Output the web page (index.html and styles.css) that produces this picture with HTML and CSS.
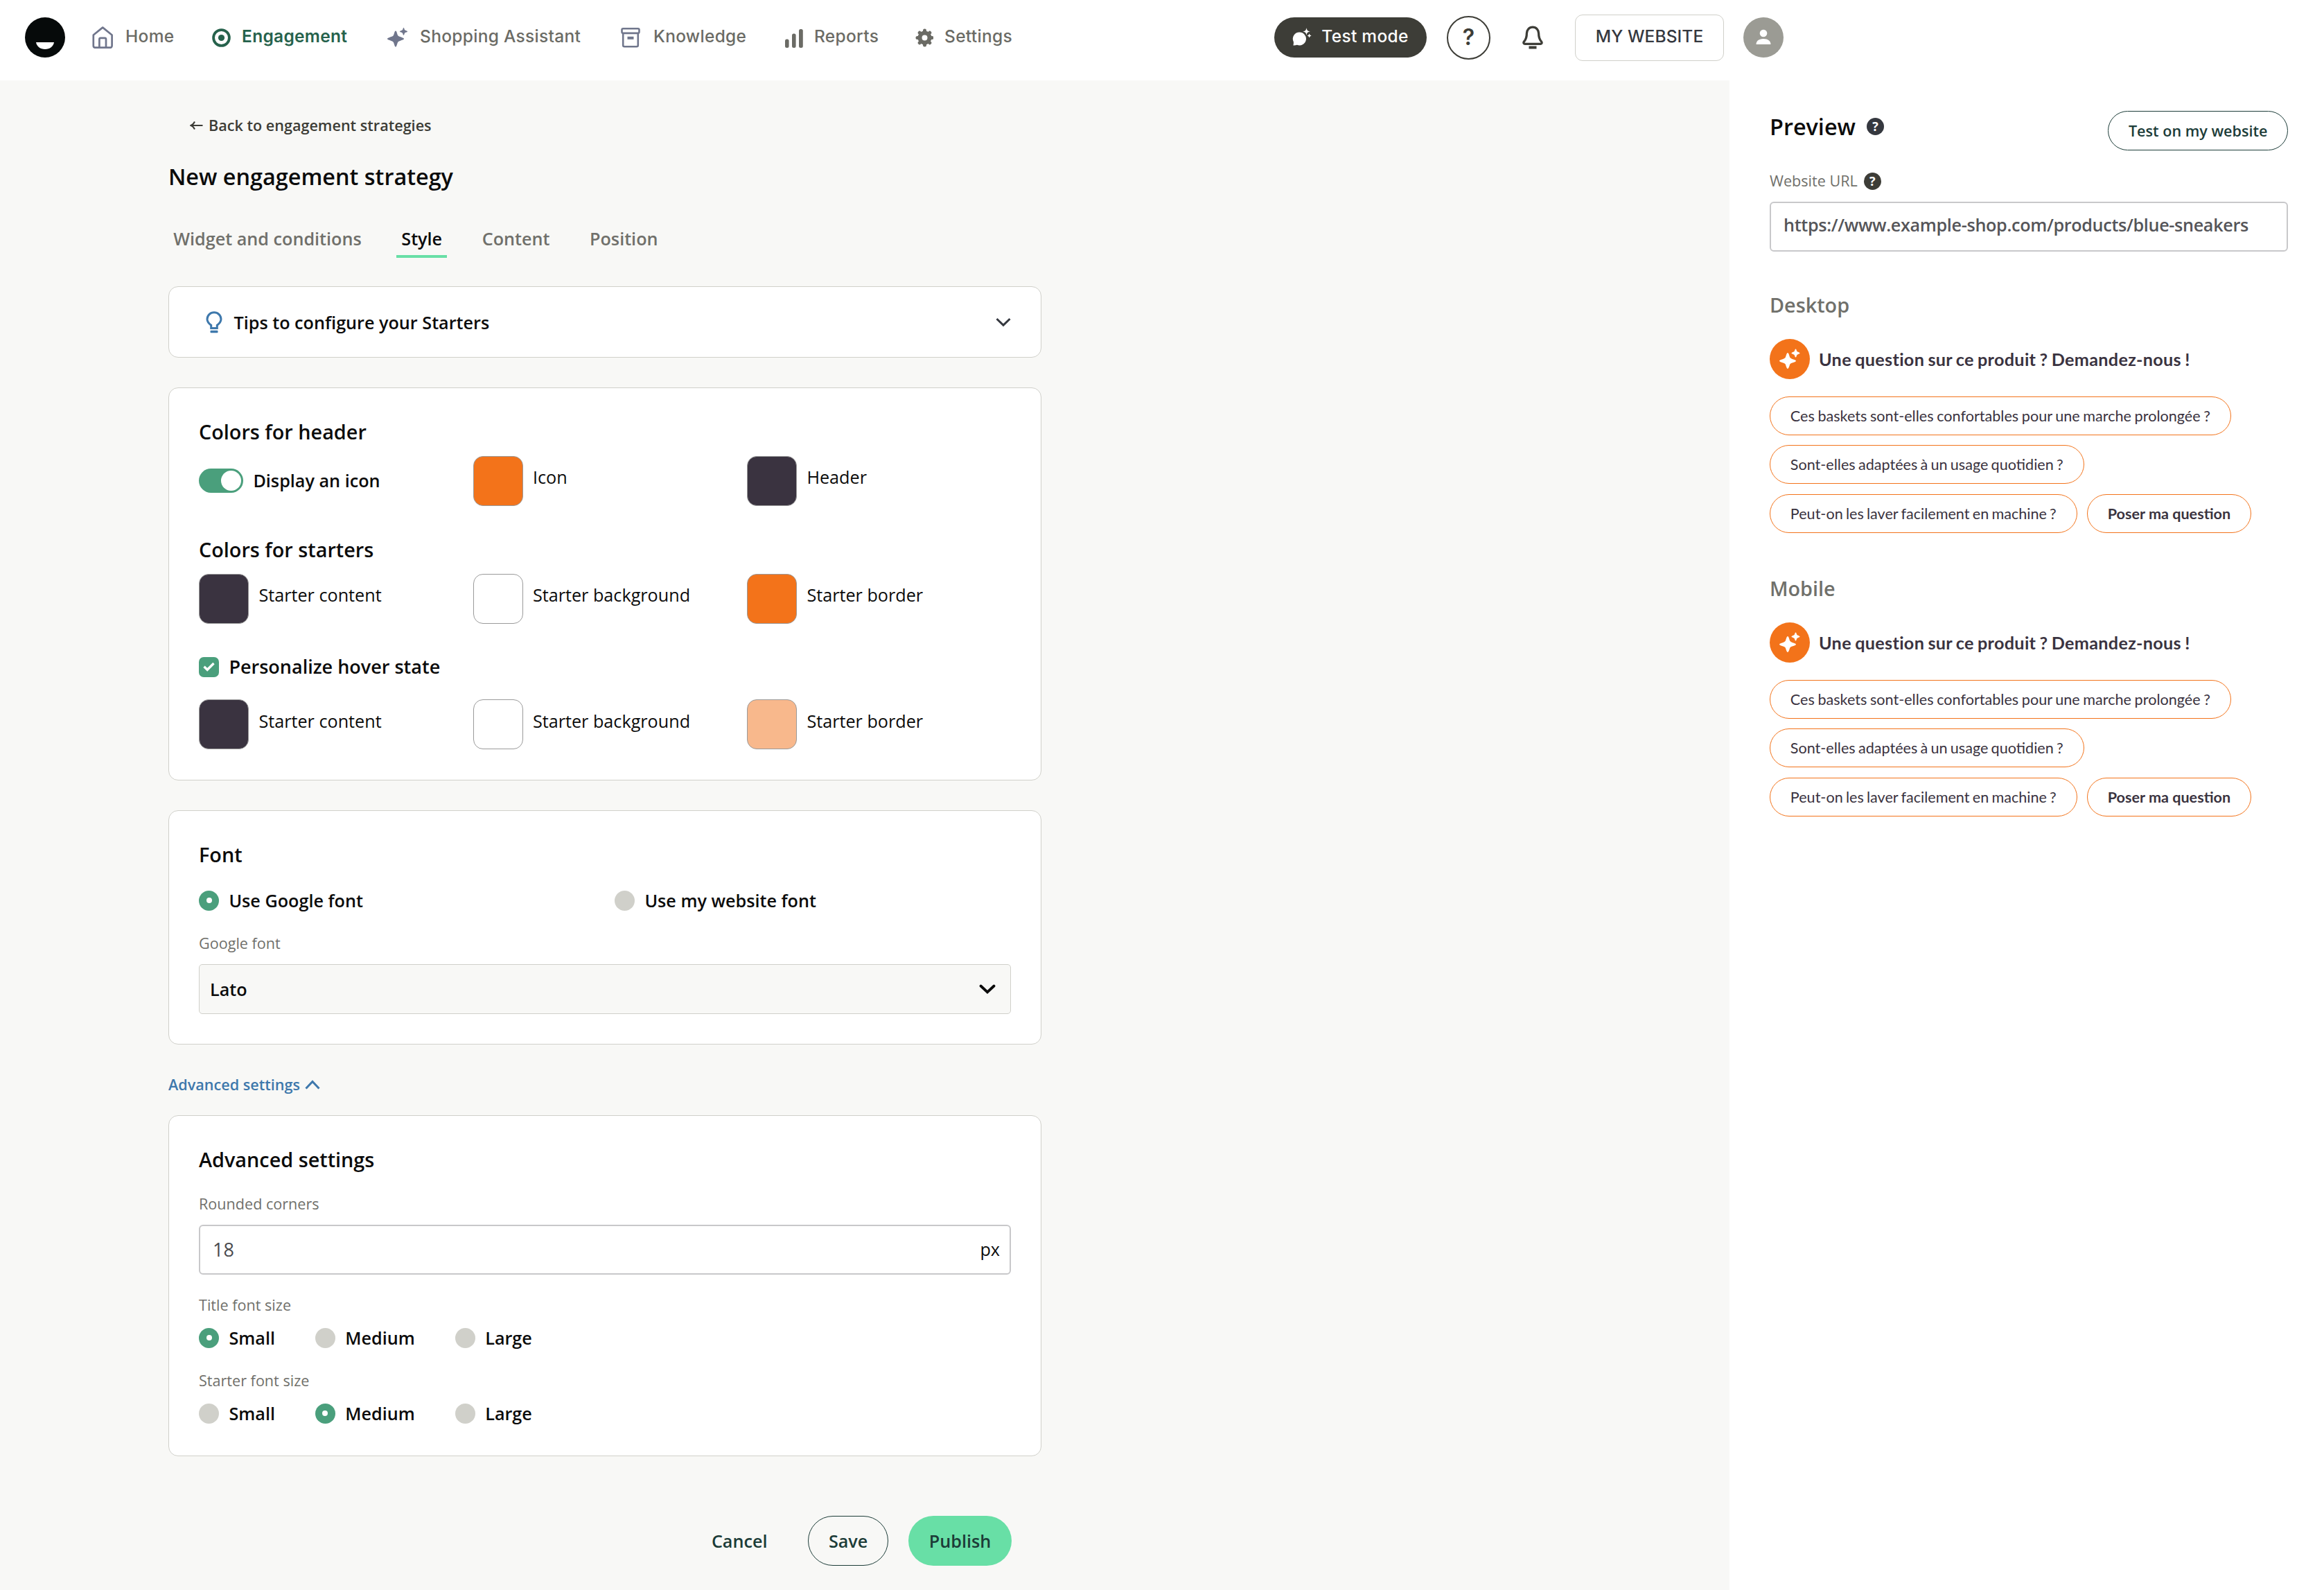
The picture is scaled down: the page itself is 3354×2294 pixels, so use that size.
FILE: index.html
```html
<!DOCTYPE html>
<html lang="en">
<head>
    <meta charset="UTF-8">
    <meta name="viewport" content="width=device-width, initial-scale=1.0">
    <title>New engagement strategy</title>
    <link rel="stylesheet" href="styles.css">
</head>
<body>
    <header class="topbar">
        <svg class="logo" viewBox="0 0 58 58">
            <circle cx="29" cy="29" r="29" fill="#060a0a"/>
            <path d="M16 36h26c-1 6-6 10-13 10s-12-4-13-10z" fill="#fff"/>
        </svg>
        <nav class="nav">
            <a class="nav-item">
                <svg class="nav-icon" viewBox="0 0 32 32" fill="none" stroke="#70768c" stroke-width="2.7" stroke-linejoin="round">
                    <path d="M1.8 12.5L15.2 1.6l13.4 10.9v15.6a2.6 2.6 0 0 1-2.6 2.6H4.4a2.6 2.6 0 0 1-2.6-2.6z"/>
                    <path d="M10.4 30.5V18.4a1.6 1.6 0 0 1 1.6-1.6h6.4a1.6 1.6 0 0 1 1.6 1.6v12.1"/>
                </svg>
                <span>Home</span>
            </a>
            <a class="nav-item active">
                <svg class="nav-icon" viewBox="0 1 32 32">
                    <circle cx="18.5" cy="17.5" r="11.4" fill="none" stroke="#26624c" stroke-width="3.8"/>
                    <circle cx="18.5" cy="17.5" r="4.6" fill="#26624c"/>
                </svg>
                <span>Engagement</span>
            </a>
            <a class="nav-item">
                <svg class="nav-icon" viewBox="0 1 32 32" fill="#70768c">
                    <path d="M13 7.500c1.500 0 1.700 3.200 3 6.300 1.200 2.600 9 3.300 9 5.200s-7.800 2.600-9 5.200c-1.300 3.100-1.500 6.300-3 6.300s-1.700-3.200-3-6.300C8.800 21.600 1 20.900 1 19s7.800-2.600 9-5.200c1.300-3.100 1.500-6.300 3-6.300z"/>
                    <path d="M24.500 3c.9 0 .9 2 1.500 3.100.7 1.100 4 1.300 4 2.300s-3.300 1.200-4 2.300c-.6 1.100-.6 3.100-1.500 3.100s-.9-2-1.500-3.100c-.7-1.100-4-1.300-4-2.300s3.300-1.200 4-2.300c.6-1.100.6-3.100 1.500-3.100z"/>
                </svg>
                <span>Shopping Assistant</span>
            </a>
            <a class="nav-item">
                <svg class="nav-icon" viewBox="0 0 32 32" fill="none" stroke="#70768c" stroke-width="2.600" stroke-linejoin="round">
                    <rect x="2.500" y="3.300" width="25" height="6.600" rx="1.800"/>
                    <path d="M4.200 9.900v17.400a2 2 0 0 0 2 2h17.600a2 2 0 0 0 2-2V9.900"/>
                    <path d="M10.500 16.800h9" stroke-width="4"/>
                </svg>
                <span>Knowledge</span>
            </a>
            <a class="nav-item">
                <svg class="nav-icon" viewBox="0 1 32 32" fill="#6b6b65">
                    <rect x="6" y="19.500" width="5.600" height="12.500" rx="2.500"/>
                    <rect x="16" y="11.500" width="5.600" height="20.500" rx="2.500"/>
                    <rect x="26" y="5" width="5.800" height="27" rx="2.500"/>
                </svg>
                <span>Reports</span>
            </a>
            <a class="nav-item">
                <svg class="nav-icon" viewBox="0 1 32 32">
                    <circle cx="19.500" cy="17.500" r="7" fill="none" stroke="#6b6b65" stroke-width="6"/>
                    <g stroke="#6b6b65" stroke-width="5" stroke-linecap="round">
                        <path d="M19.500 7v2M19.500 26v2M9 17.500h2M28 17.500h2M12.200 10.200l1.300 1.300M25.500 23.500l1.300 1.300M26.800 10.200l-1.300 1.300M13.500 23.500l-1.300 1.300"/>
                    </g>
                </svg>
                <span>Settings</span>
            </a>
        </nav>
        <button class="test-mode" type="button">
            <svg width="30" height="30" viewBox="0 0 30 30" fill="#fff">
                <path d="M10.500 7.500a9.500 9.500 0 1 1-3.600 18.300c-1.500.7-3.500.9-5.500.7 .4-1.500.7-3.200.4-5.200A9.500 9.500 0 0 1 10.500 7.500z"/>
                <path d="M20.500 0.500l1.700 4.300 4.300 1.700-4.300 1.700-1.700 4.300-1.700-4.300-4.300-1.700 4.300-1.700z" stroke="#3d3d37" stroke-width="1"/>
                <path d="M24.600 9.500l1 2 2 1-2 1-1 2-1-2-2-1 2-1z"/>
            </svg>
            <span>Test mode</span>
        </button>
        <button class="help" type="button"><span>?</span></button>
        <svg class="bell" viewBox="0 0 32 34">
            <path d="M16 2.200c5.200 0 8.600 3.900 8.600 8.900 0 6.600 1.500 9.400 3.800 11.800 1.400 1.500.9 3.400-1 3.400H4.600c-1.900 0-2.400-1.900-1-3.400 2.300-2.400 3.800-5.200 3.800-11.800 0-5 3.400-8.900 8.600-8.900z" fill="none" stroke="#3d3d37" stroke-width="3.300"/>
            <rect x="10.500" y="29.500" width="11" height="4" fill="#3d3d37"/>
        </svg>
        <button class="website" type="button"><span>MY WEBSITE</span></button>
        <svg class="avatar" viewBox="0 0 58 58">
            <circle cx="29" cy="29" r="29" fill="#9b9b94"/>
            <circle cx="29" cy="23" r="5.300" fill="#fff"/>
            <path d="M18.500 39c0-5 4-8 10.500-8s10.500 3 10.500 8z" fill="#fff"/>
        </svg>
    </header>

    <div class="layout">
        <main class="main">
            <a class="back">
                <svg width="19" height="16" viewBox="0 0 19 16" fill="none" stroke="#3d3d37" stroke-width="2">
                    <path d="M18.500 8H2M7 2.500Q5 6.800 1.500 8 5 9.200 7 13.500"/>
                </svg>
                <span>Back to engagement strategies</span>
            </a>
            <h1>New engagement strategy</h1>
            <div class="tabs">
                <a class="tab">Widget and conditions</a>
                <a class="tab selected">Style</a>
                <a class="tab">Content</a>
                <a class="tab">Position</a>
            </div>

            <section class="card tips">
                <svg width="24" height="32" viewBox="0 0 24 32">
                    <path d="M7.700 24.500v-4.200C4.500 17.800 2 15.500 2 11.500a10 9.800 0 0 1 20 0c0 4-2.500 6.300-5.700 8.800v4.200z" fill="none" stroke="#3e78ac" stroke-width="3"/>
                    <rect x="6.500" y="27.800" width="11" height="3.400" rx="1" fill="#3e78ac"/>
                </svg>
                <span>Tips to configure your Starters</span>
                <svg class="tips-arrow" width="22" height="14" viewBox="0 0 22 14" fill="none" stroke="#35383f" stroke-width="3">
                    <path d="M1.500 2l9.500 9.200L20.500 2"/>
                </svg>
            </section>

            <section class="card colors">
                <h2>Colors for header</h2>
                <div class="color-row">
                    <label class="option">
                        <span class="toggle"></span>
                        <span>Display an icon</span>
                    </label>
                    <div class="color"><span class="swatch orange"></span><span>Icon</span></div>
                    <div class="color"><span class="swatch dark"></span><span>Header</span></div>
                </div>
                <h2 class="second">Colors for starters</h2>
                <div class="color-row">
                    <div class="color"><span class="swatch dark"></span><span>Starter content</span></div>
                    <div class="color"><span class="swatch white"></span><span>Starter background</span></div>
                    <div class="color"><span class="swatch orange"></span><span>Starter border</span></div>
                </div>
                <label class="option hover-option">
                    <span class="checkbox">
                        <svg width="17" height="14" viewBox="0 0 17 14" fill="none" stroke="#fff" stroke-width="3.400">
                            <path d="M1.500 6.800l4.700 4.500L15.500 2"/>
                        </svg>
                    </span>
                    <span>Personalize hover state</span>
                </label>
                <div class="color-row hover-row">
                    <div class="color"><span class="swatch dark"></span><span>Starter content</span></div>
                    <div class="color"><span class="swatch white"></span><span>Starter background</span></div>
                    <div class="color"><span class="swatch peach"></span><span>Starter border</span></div>
                </div>
            </section>

            <section class="card font-card">
                <h2>Font</h2>
                <div class="font-options">
                    <label class="option"><span class="radio checked"></span><span>Use Google font</span></label>
                    <label class="option"><span class="radio"></span><span>Use my website font</span></label>
                </div>
                <div class="field-label">Google font</div>
                <div class="select">
                    <span>Lato</span>
                    <svg width="24" height="16" viewBox="0 0 24 16" fill="none" stroke="#0b0b0b" stroke-width="3.800" stroke-linecap="round">
                        <path d="M2.500 3.500L12 12.500l9.500-9"/>
                    </svg>
                </div>
            </section>

            <a class="advanced-link">
                <span>Advanced settings</span>
                <svg width="22" height="14" viewBox="0 0 22 14" fill="none" stroke="#3e78ac" stroke-width="3">
                    <path d="M1.500 12.500L11 2.500l9.500 10"/>
                </svg>
            </a>

            <section class="card advanced">
                <h2>Advanced settings</h2>
                <div class="field-label">Rounded corners</div>
                <div class="number-field">
                    <input type="text" value="18">
                    <span>px</span>
                </div>
                <div class="field-label">Title font size</div>
                <div class="size-options">
                    <label class="option"><span class="radio checked"></span><span>Small</span></label>
                    <label class="option"><span class="radio"></span><span>Medium</span></label>
                    <label class="option"><span class="radio"></span><span>Large</span></label>
                </div>
                <div class="field-label">Starter font size</div>
                <div class="size-options">
                    <label class="option"><span class="radio"></span><span>Small</span></label>
                    <label class="option"><span class="radio checked"></span><span>Medium</span></label>
                    <label class="option"><span class="radio"></span><span>Large</span></label>
                </div>
            </section>

            <div class="actions">
                <button class="btn" type="button">Cancel</button>
                <button class="btn save" type="button">Save</button>
                <button class="btn publish" type="button">Publish</button>
            </div>
        </main>

        <aside class="preview">
            <div class="preview-head">
                <h1>Preview</h1>
                <span class="info info-blue">?</span>
                <button class="test-button" type="button">Test on my website</button>
            </div>
            <div class="url-label">
                <span>Website URL</span>
                <span class="info">?</span>
            </div>
            <input class="url" type="text" value="https://www.example-shop.com/products/blue-sneakers">

            <h2>Desktop</h2>
            <div class="widget">
                <div class="widget-title">
                    <svg width="58" height="58" viewBox="0 0 58 58">
                        <circle cx="29" cy="29" r="29" fill="#f3731a"/>
                        <path d="M26 20c1.500 0 2.200 4 3.300 6.800 1.200 2.500 8.700 3.200 8.700 4.900s-7.500 2.400-8.700 4.900C28.200 39.400 27.500 43 26 43s-2.200-3.600-3.300-6.400C21.500 34.100 14 33.400 14 31.700s7.500-2.400 8.700-4.900C23.800 24 24.500 20 26 20z" fill="#fff"/>
                        <path d="M37.500 14.500c1 0 1.200 2.300 1.800 3.300.7 1.200 4.200 1.500 4.200 2.700s-3.500 1.500-4.200 2.700c-.6 1-.8 3.300-1.800 3.300s-1.200-2.300-1.800-3.300c-.7-1.200-4.200-1.500-4.200-2.700s3.500-1.500 4.200-2.700c.6-1 .8-3.300 1.800-3.300z" fill="#fff"/>
                    </svg>
                    <span>Une question sur ce produit ? Demandez-nous !</span>
                </div>
                <div class="starters">
                    <span class="starter long">Ces baskets sont-elles confortables pour une marche prolongée ?</span>
                    <span class="starter">Sont-elles adaptées à un usage quotidien ?</span>
                    <span class="starter">Peut-on les laver facilement en machine ?</span>
                    <span class="starter ask">Poser ma question</span>
                </div>
            </div>

            <h2>Mobile</h2>
            <div class="widget">
                <div class="widget-title">
                    <svg width="58" height="58" viewBox="0 0 58 58">
                        <circle cx="29" cy="29" r="29" fill="#f3731a"/>
                        <path d="M26 20c1.500 0 2.200 4 3.300 6.800 1.200 2.500 8.700 3.200 8.700 4.900s-7.500 2.400-8.700 4.900C28.200 39.400 27.500 43 26 43s-2.200-3.600-3.300-6.400C21.500 34.100 14 33.400 14 31.700s7.500-2.400 8.700-4.900C23.800 24 24.500 20 26 20z" fill="#fff"/>
                        <path d="M37.500 14.500c1 0 1.200 2.300 1.800 3.300.7 1.200 4.200 1.500 4.200 2.700s-3.500 1.500-4.200 2.700c-.6 1-.8 3.300-1.800 3.300s-1.200-2.300-1.800-3.300c-.7-1.200-4.200-1.500-4.200-2.700s3.500-1.500 4.200-2.700c.6-1 .8-3.300 1.800-3.300z" fill="#fff"/>
                    </svg>
                    <span>Une question sur ce produit ? Demandez-nous !</span>
                </div>
                <div class="starters">
                    <span class="starter long">Ces baskets sont-elles confortables pour une marche prolongée ?</span>
                    <span class="starter">Sont-elles adaptées à un usage quotidien ?</span>
                    <span class="starter">Peut-on les laver facilement en machine ?</span>
                    <span class="starter ask">Poser ma question</span>
                </div>
            </div>
        </aside>
    </div>
</body>
</html>
```
FILE: styles.css
```css
* {
    box-sizing: border-box;
}
body {
    margin: 0;
    height: 2294px;
    display: flex;
    flex-direction: column;
    font-family: "Open Sans", sans-serif;
    font-size: 25.2px;
    color: #0b0b0b;
    background-color: #fff;
    white-space: nowrap;
}
svg {
    display: block;
    flex-shrink: 0;
}
h1, h2 {
    margin: 0;
    font-weight: 600;
}
h1 {
    font-size: 32.4px;
    line-height: 44px;
}
h2 {
    font-size: 28.8px;
    line-height: 40px;
}
button {
    font-family: inherit;
    font-size: 25.2px;
    font-weight: 600;
    padding: 0;
    border: none;
    background: none;
    cursor: pointer;
}
input {
    font-family: inherit;
    outline: none;
    color: #555559;
}

/* Top bar */
.topbar {
    display: flex;
    align-items: center;
    height: 116px;
    padding: 0 0 8px 36px;
    font-family: Inter, sans-serif;
    font-size: 24.5px;
    font-weight: 500;
    flex-shrink: 0;
}
.topbar span {
    letter-spacing: 0.3px;
    line-height: 32px;
    padding-bottom: 4px;
}
.topbar button {
    display: flex;
    align-items: center;
    justify-content: center;
    font-family: inherit;
    font-size: inherit;
    font-weight: 500;
}
.logo, .avatar {
    width: 58px;
    height: 58px;
}
.nav {
    display: grid;
    grid-template-columns: 168px 257px 337px 232px 188px 524px;
    margin-left: 39px;
}
.nav-item {
    display: flex;
    align-items: center;
    gap: 16px;
    color: #6b6b65;
}
.nav-item.active {
    color: #26624c;
    font-weight: 600;
}
.nav-icon {
    width: 32px;
    height: 32px;
}
.topbar .test-mode {
    width: 220px;
    height: 58px;
    gap: 12px;
    border-radius: 29px;
    background-color: #3d3d37;
    color: #fff;
}
.topbar .help {
    width: 63px;
    height: 63px;
    margin-left: 29px;
    border: 2px solid #3d3d37;
    border-radius: 50%;
    color: #3d3d37;
    font-size: 32px;
    font-weight: 600;
}
.topbar .help span {
    padding-bottom: 0;
}
.bell {
    width: 32px;
    height: 34px;
    margin-left: 45px;
}
.topbar .website {
    width: 215px;
    height: 67px;
    margin-left: 45px;
    border: 1px solid #d0d0ca;
    border-radius: 11px;
    color: #35383f;
    background-color: #fff;
}
.topbar .website span {
    letter-spacing: 0.1px;
}
.avatar {
    margin-left: 28px;
}

/* Page columns */
.layout {
    display: flex;
    flex: 1;
}
.main {
    width: 2496px;
    padding: 49px 0 0 243px;
    background-color: #f8f8f6;
}
.back {
    display: flex;
    align-items: center;
    gap: 8px;
    margin-left: 31px;
    line-height: 32px;
    font-size: 21.6px;
    font-weight: 600;
    color: #3d3d37;
}
.main > h1 {
    margin-top: 35px;
}
.tabs {
    display: flex;
    gap: 43.2px;
    margin: 50px 0 41px;
}
.tab {
    padding: 0 7.2px 6px;
    border-bottom: 4px solid transparent;
    line-height: 36px;
    font-weight: 600;
    color: #70706b;
}
.tab.selected {
    color: #0b0b0b;
    border-color: #68dfa6;
}

/* Cards */
.card {
    width: 1260px;
    margin-bottom: 43px;
    padding: 43px;
    border: 1px solid #d0d0ca;
    border-radius: 14px;
    background-color: #fff;
}
.tips {
    display: flex;
    align-items: center;
    height: 103px;
    padding: 0 43px 0 53px;
    gap: 16.5px;
    font-weight: 600;
}
.tips-arrow {
    margin-left: auto;
}
.option {
    display: flex;
    align-items: center;
    gap: 14.4px;
    line-height: 36px;
    font-weight: 600;
}
.color-row {
    display: grid;
    grid-template-columns: 395.5px 395.5px auto;
    margin-top: 15px;
}
.color-row .option {
    padding-bottom: 2px;
}
.color {
    display: flex;
    align-items: center;
    gap: 14.4px;
    height: 72px;
}
.color span:last-child {
    padding-bottom: 12px;
}
.swatch {
    width: 72px;
    height: 72px;
    border: 1px solid #9a9a9a;
    border-radius: 14px;
}
.orange {
    background-color: #f3731a;
}
.dark {
    background-color: #3a3340;
}
.white {
    background-color: #fff;
}
.peach {
    background-color: #f8b88c;
}
.second {
    margin-top: 43px;
}
.toggle {
    display: flex;
    justify-content: flex-end;
    width: 64px;
    height: 35px;
    padding: 3px;
    border-radius: 18px;
    background-color: #4a9f7c;
}
.toggle::after {
    content: "";
    width: 29px;
    height: 29px;
    border-radius: 50%;
    background-color: #fff;
}
.checkbox {
    display: flex;
    align-items: center;
    justify-content: center;
    width: 29px;
    height: 29px;
    border-radius: 7px;
    background-color: #4a9f7c;
}
.hover-option {
    margin-top: 44px;
    font-size: 27px;
}
.hover-row {
    margin-top: 29px;
}
.hover-row .color span:last-child {
    padding-bottom: 11px;
}
.colors {
    height: 567px;
}
.radio {
    display: flex;
    align-items: center;
    justify-content: center;
    width: 29px;
    height: 29px;
    border-radius: 50%;
    background-color: #d0d0ca;
}
.radio.checked {
    background-color: #4a9f7c;
}
.radio.checked::after {
    content: "";
    width: 8px;
    height: 8px;
    border-radius: 50%;
    background-color: #fff;
}
.font-options {
    display: grid;
    grid-template-columns: 600px auto;
    margin-top: 28px;
}
.field-label {
    margin-top: 28px;
    line-height: 32px;
    font-size: 21.6px;
    color: #70706b;
}
.select {
    display: flex;
    align-items: center;
    justify-content: space-between;
    height: 72px;
    margin-top: 14px;
    padding: 0 21px 0 15px;
    border: 1px solid #d0d0ca;
    border-radius: 5px;
    background-color: #f8f8f6;
    font-weight: 600;
}
.advanced-link {
    display: flex;
    align-items: center;
    gap: 7px;
    margin: -1px 0 28px;
    line-height: 32px;
    font-size: 21.6px;
    font-weight: 600;
    color: #3e78ac;
}
.number-field {
    display: flex;
    align-items: center;
    height: 72px;
    margin-top: 14px;
    padding: 0 14px 2px 18px;
    border: 2px solid #c8c8ca;
    border-radius: 6px;
}
.number-field input {
    flex: 1;
    border: none;
    padding: 0;
    font-size: 27px;
    color: #4a4a4e;
}
.size-options {
    display: flex;
    gap: 58px;
    margin-top: 13px;
}
.advanced {
    height: 492px;
}
.actions {
    display: flex;
    justify-content: flex-end;
    gap: 28.8px;
    width: 1217px;
    margin-top: 86px;
}
.btn {
    height: 72px;
    padding: 0 28.8px;
    border: 1px solid transparent;
    border-radius: 36px;
    color: #1c3c38;
}
.save {
    border-color: #1c3c38;
}
.publish {
    background-color: #68dfa6;
}

/* Preview column */
.preview {
    flex: 1;
    padding: 44px 52px 0 58px;
}
.preview-head {
    display: flex;
    align-items: flex-start;
}
.info {
    display: flex;
    align-items: center;
    justify-content: center;
    width: 25px;
    height: 25px;
    border-radius: 50%;
    background-color: #3d3d37;
    color: #fff;
    font-size: 18px;
    font-weight: 700;
    line-height: 25px;
}
.info-blue {
    margin: 10px 0 0 16px;
    background-color: #35383f;
}
.test-button {
    height: 57px;
    margin-left: auto;
    padding: 0 28.5px;
    border: 1px solid #1c3c38;
    border-radius: 29px;
    font-size: 21.6px;
    color: #1c3c38;
}
.url-label {
    display: flex;
    align-items: center;
    gap: 9px;
    margin-top: 28px;
    line-height: 32px;
    font-size: 21.6px;
    color: #70706b;
}
.url {
    display: block;
    width: 100%;
    height: 72px;
    margin-top: 14px;
    padding: 0 18px 7px;
    border: 2px solid #c8c8ca;
    border-radius: 6px;
    font-size: 25.2px;
    font-weight: 600;
    letter-spacing: -0.34px;
}
.preview h2 {
    margin-top: 57px;
    color: #70706b;
}
.widget {
    font-family: Lato, sans-serif;
    color: #3a3340;
}
.widget-title {
    display: flex;
    align-items: center;
    gap: 13px;
    margin-top: 29px;
    font-weight: 700;
    letter-spacing: 0.32px;
    word-spacing: -1.2px;
}
.starters {
    display: flex;
    flex-wrap: wrap;
    gap: 14.4px 14.4px;
    margin-top: 25px;
}
.starter {
    height: 56px;
    padding: 0 28.8px;
    border: 1px solid #f3731a;
    border-radius: 28px;
    line-height: 54px;
    font-size: 21.6px;
    word-spacing: -1.3px;
}
.starter.long {
    word-spacing: -0.9px;
}
.starter.ask {
    font-weight: 700;
    word-spacing: 0;
}
.widget + h2 {
    margin-top: 60px;
}
```
